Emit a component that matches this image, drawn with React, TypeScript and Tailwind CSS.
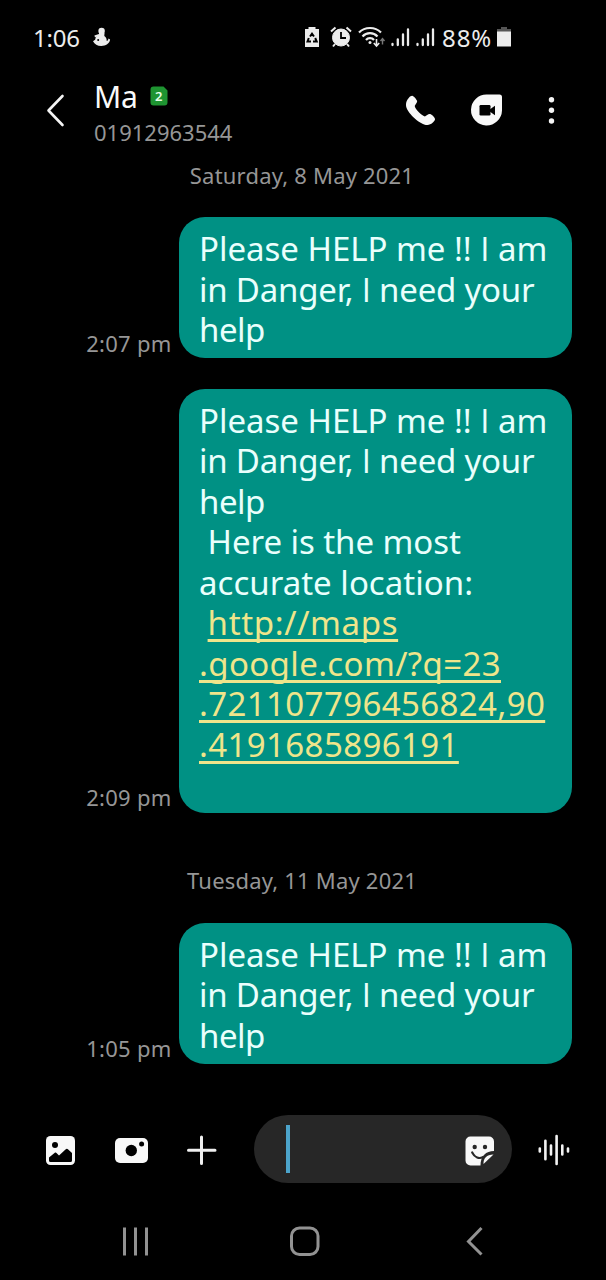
import React from "react";

type Line = { text: string; spacing: string; link?: boolean };

const help: Line[] = [
  { text: "Please HELP me !! I am", spacing: "tracking-[-0.02px]" },
  { text: "in Danger, I need your", spacing: "tracking-[-0.22px]" },
  { text: "help", spacing: "tracking-[-0.5px]" },
];

const location: Line[] = [
  ...help,
  { text: " Here is the most", spacing: "tracking-[-0.05px]" },
  { text: "accurate location:", spacing: "tracking-[0.02px]" },
  { text: "http://maps", spacing: "tracking-[0.65px]", link: true },
  { text: ".google.com/?q=23", spacing: "tracking-[0.38px]", link: true },
  { text: ".721107796456824,90", spacing: "tracking-[0.4px]", link: true },
  { text: ".4191685896191", spacing: "tracking-[0.4px]", link: true },
  { text: " ", spacing: "tracking-[0px]" },
];

// Noto Sans draws a capital I with bars; Open Sans has the plain stem.
function PlainI({ text }: { text: string }) {
  return (
    <>
      {text.split(/(I)/).map((part, i) =>
        part === "I" ? (
          <span key={i} className="font-['Open_Sans',sans-serif] font-medium">
            I
          </span>
        ) : (
          part
        ),
      )}
    </>
  );
}

function Message({ time, lines }: { time: string; lines: Line[] }) {
  return (
    <div className="flex items-end pr-[34px]">
      <div className="w-[172px] pr-[0.5px] pb-[3.5px] text-right text-[22px] leading-6 tracking-[0.25px] text-[#969696]">{time}</div>
      <div className="ml-[7px] w-[393px] rounded-[26px] bg-[#009184] pt-[12px] pb-[7.5px] pl-5">
        {lines.map((l, i) => (
          <div key={i} className="h-[40.45px] text-[33px] leading-[40.45px] whitespace-pre text-[#e9fffc]">
            {l.link && l.text.startsWith("http") && " "}
            <span
              className={
                l.link
                  ? `${l.spacing} text-[#efe58b] underline decoration-[2.5px] underline-offset-[4px] [text-decoration-skip-ink:none]`
                  : l.spacing
              }
            >
              <PlainI text={l.text} />
            </span>
          </div>
        ))}
      </div>
    </div>
  );
}

function StatusBar() {
  return (
    <div className="flex h-[76px] items-start pt-[22px] text-[24px] leading-8 text-[#ececec]">
      <span className="ml-[33px] w-[48px] tracking-[-0.2px]">1:06</span>
      <svg className="mt-[5px] ml-[11px] shrink-0" width="20" height="22" viewBox="0 0 20 22" fill="#ececec">
        <circle cx="9.6" cy="4" r="3.2" />
        <path d="M7 6h5.500l-.2 3c1.800 1.400 2.600 3.200 2.400 5 1.200-.2 1.400-.9 1.800-2.400l1.600 1c-.5 4-4.300 6.400-8.800 6.400-4 0-6.600-1.600-8.300-4.800l2.100-1.500.9-3.300 3-1.400z" />
        <path d="M9.500 7 2.700 9.300" stroke="#ececec" strokeWidth="1.800" />
        <circle cx="6.200" cy="13" r="1" fill="#000" />
      </svg>
      <svg className="mt-[4px] ml-[192px] shrink-0" width="16" height="22" viewBox="0 0 16 22" fill="#ececec">
        <path d="M4.500 1h7v2H15v18H1V3h3.500z" />
        <g stroke="#000" strokeWidth="2" fill="none">
          <path d="M6 10.500 8 7.800l2 2.700M4.800 12 3.500 15.500H7M11.200 12l1.500 3.500H9" />
        </g>
      </svg>
      <svg className="mt-[4px] ml-[10px] shrink-0" width="22" height="22" viewBox="0 0 22 22" fill="none" stroke="#ececec">
        <circle cx="11" cy="11.500" r="8.500" fill="#ececec" />
        <path d="M1 5.500 5.500 1.500M21 5.500l-4.500-4M5 18l-2 2.500M17 18l2 2.500" strokeWidth="2" />
        <path d="M11 6v6h5" stroke="#000" strokeWidth="1.800" />
      </svg>
      <svg className="mt-[4px] ml-[6px] shrink-0" width="28" height="22" viewBox="0 0 28 22" fill="none" stroke="#ececec" strokeWidth="2.200">
        <path d="M1 6.500c6-6 16-6 22 0M4.500 10.500c4-4.500 11-4.500 15 0M8 14c2-2.500 6-2.500 8 0" />
        <circle cx="12" cy="16.500" r="1.500" fill="#ececec" stroke="none" />
        <path d="M18.500 13v6.500M15.800 17l2.700 3 2.700-3" strokeWidth="1.600" />
        <path d="M24.500 18.500v-6M22.500 15l2-2.500 2 2.500" stroke="#777" strokeWidth="1.400" />
      </svg>
      {[0, 1].map((n) => (
        <svg key={n} className="mt-[5px] ml-[4px] shrink-0" width="21" height="20" viewBox="0 0 21 20" stroke="#ececec" strokeWidth="2.300" strokeLinecap="round">
          <path d="M2.500 18v-1M7.800 18v-5.500M13 18V7.500M18 18V2.500" />
        </svg>
      ))}
      <span className="ml-[6px] w-[52px] shrink-0 tracking-[0.900px]">88%</span>
      <svg className="mt-[5px] ml-[3px] shrink-0" width="14" height="20" viewBox="0 0 14 20">
        <path d="M4 0h6v2h4v4H0V2h4z" fill="#555" />
        <path d="M0 4.500h14V19.500H0z" fill="#ececec" />
      </svg>
    </div>
  );
}

function Header() {
  return (
    <div className="flex h-[74px] items-start">
      <svg className="mt-[17px] ml-[45px] shrink-0" width="22" height="36" viewBox="0 0 22 36" fill="none" stroke="#f5f5f5" strokeWidth="2.600" strokeLinecap="round" strokeLinejoin="round">
        <path d="M17.500 3 3.500 17.500l14 14.500" />
      </svg>
      <div className="ml-[27px] w-[300px]">
        <div className="flex h-[42px] items-center text-[#fafafa]">
          <span className="w-[56px] text-[30px] leading-[42px] tracking-[-0.3px]">Ma</span>
          <svg className="-mt-[2px]" width="18" height="20" viewBox="0 0 18 20">
            <path d="M3 .500h10.500L17.500 4.500V16.500a3 3 0 0 1-3 3H3.500a3 3 0 0 1-3-3V3.500a3 3 0 0 1 3-3z" fill="#1e9431" />
            <text x="8.800" y="14.500" textAnchor="middle" fontSize="13" fontWeight="600" fill="#e8ffe8">2</text>
          </svg>
        </div>
        <div className="-mt-px text-[22px] leading-[30px] text-[#969696]">01912963544</div>
      </div>
      <svg className="mt-[18px] ml-[9px] shrink-0" width="34" height="34" viewBox="0 0 34 34" fill="#f8f8f8">
        <path d="M3.300 8.200C4.500 4.500 7.500 1.500 9.200 1.700c1.600.400 4.200 3.400 4.900 5.100.600 1.500-1.800 3.700-2.400 5.200.800 3.600 6.400 9.200 10.200 10.400 1.600-.500 3.600-2.900 5.200-2.300 1.700.600 4.600 3.100 4.900 4.900.200 2.200-4 6-7.500 6C16.500 31 3 17.500 3 11.200c0-1 0-2 .300-3z" />
      </svg>
      <svg className="mt-[18px] ml-[33px] shrink-0" width="34" height="34" viewBox="0 0 34 34">
        <path d="M17 .500h12.500A2.500 2.500 0 0 1 32 3V16.500A15.500 15.500 0 1 1 17 .500z" fill="#f8f8f8" />
        <rect x="9.500" y="11" width="11" height="10.500" rx="1.200" />
        <path d="m20 15.200 5-3.500v9.500L20 17.700z" />
      </svg>
      <svg className="mt-[18px] ml-[40px] shrink-0" width="14" height="34" viewBox="0 0 14 34" fill="#f5f5f5">
        <circle cx="7.500" cy="5.800" r="2.700" />
        <circle cx="7.500" cy="16.300" r="2.700" />
        <circle cx="7.500" cy="27" r="2.700" />
      </svg>
    </div>
  );
}

function Composer() {
  return (
    <div className="flex h-[68px] items-center">
      <svg className="mt-[3px] ml-[46px] shrink-0" width="29" height="29" viewBox="0 0 29 29">
        <rect width="29" height="29" rx="4.500" fill="#f8f8f8" />
        <circle cx="9" cy="9" r="3" />
        <path d="M3 21.500 8.500 17c1-.800 1.500-.500 2 0l2.500 2.500 6.500-6c1-1 1.800-1 2.700 0L26 17v7.500a1.500 1.500 0 0 1-1.500 1.500h-20A1.500 1.500 0 0 1 3 24.500z" />
      </svg>
      <svg className="mt-[3px] ml-[40px] shrink-0" width="33" height="25" viewBox="0 0 33 25">
        <rect width="33" height="25" rx="5" fill="#f8f8f8" />
        <circle cx="16.300" cy="12.500" r="5.700" />
        <circle cx="26.600" cy="6" r="2.500" />
      </svg>
      <svg className="mt-[2px] ml-[39px] shrink-0" width="30" height="30" viewBox="0 0 30 30" stroke="#f0f0f0" strokeWidth="3" strokeLinecap="round">
        <path d="M14.500 2v26.500M1.500 15.300H28" />
      </svg>
      <div className="ml-[37px] flex h-[68px] w-[258px] shrink-0 items-center rounded-full bg-[#272727]">
        <div className="ml-[31.500px] h-[48px] w-[4px] bg-[#4ca4cb]" />
        <svg className="mt-[4px] ml-[175.500px] shrink-0" width="30" height="30" viewBox="0 0 30 30">
          <path d="M5.500.500h18.500a5 5 0 0 1 5 5v9.500c-8 0-13.500 5-13.500 14.500H5.500a5 5 0 0 1-5-5V5.500a5 5 0 0 1 5-5z" fill="#f8f8f8" />
          <path d="M28.500 18.500 18.500 28c-.300-5.500 3-9.500 10-9.500z" fill="#f8f8f8" />
          <circle cx="9.700" cy="11" r="2.200" fill="#272727" />
          <circle cx="20" cy="11" r="2.200" fill="#272727" />
          <path d="M7.200 16.500c2.500 5 7 6.500 11 4.500" stroke="#272727" strokeWidth="2.200" strokeLinecap="round" fill="none" />
        </svg>
      </div>
      <svg className="mt-[3px] ml-[25px] shrink-0" width="34" height="34" viewBox="0 0 34 34" stroke="#f3f3f3" strokeWidth="2.600" strokeLinecap="round">
        <path d="M2.800 15.500v3M8.400 7.800v18.500M14 12.500v9M19.600 3v28M25.300 12.500v9M31 15.500v3" />
      </svg>
    </div>
  );
}

export default function App() {
  return (
    <div className="h-[1280px] w-[606px] overflow-hidden bg-black font-['Noto_Sans','Open_Sans',sans-serif]">
      <StatusBar />
      <Header />
      <div className="h-[67.200px] pt-[9px] pr-[2px] text-center text-[22px] leading-8 tracking-[0.2px] text-[#969696]">Saturday, 8 May 2021</div>
      <Message time="2:07 pm" lines={help} />
      <div className="h-[31px]" />
      <Message time="2:09 pm" lines={location} />
      <div className="h-[110px] pt-[51px] pr-[2px] text-center text-[22px] leading-8 tracking-[0.2px] text-[#969696]">Tuesday, 11 May 2021</div>
      <Message time="1:05 pm" lines={help} />
      <div className="h-[51.100px]" />
      <Composer />
      <div className="flex pt-[42px]">
        <svg className="ml-[120px]" width="32" height="32" viewBox="0 0 32 32" stroke="#929292" strokeWidth="3">
          <path d="M4.500 2.500v28M15.500 2.500v28M26.500 2.500v28" />
        </svg>
        <svg className="ml-[137px]" width="32" height="32" viewBox="0 0 32 32" fill="none" stroke="#929292" strokeWidth="3">
          <rect x="2.500" y="3" width="26.500" height="26.500" rx="8" />
        </svg>
        <svg className="ml-[143px]" width="24" height="32" viewBox="0 0 24 32" fill="none" stroke="#929292" strokeWidth="3">
          <path d="M17.500 3 4.500 16.500l13 13" />
        </svg>
      </div>
    </div>
  );
}
